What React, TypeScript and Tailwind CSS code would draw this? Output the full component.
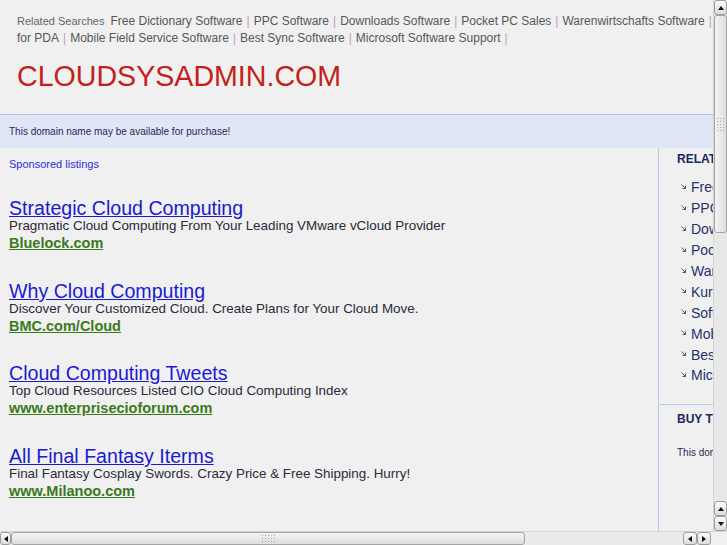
import React from "react";

const topLinks = [
  "Free Dictionary Software",
  "PPC Software",
  "Downloads Software",
  "Pocket PC Sales",
  "Warenwirtschafts Software",
];
const topLinks2 = [
  "Mobile Field Service Software",
  "Best Sync Software",
  "Microsoft Software Support",
];

const ads = [
  {
    title: "Strategic Cloud Computing",
    desc: "Pragmatic Cloud Computing From Your Leading VMware vCloud Provider",
    url: "Bluelock.com",
  },
  {
    title: "Why Cloud Computing",
    desc: "Discover Your Customized Cloud. Create Plans for Your Cloud Move.",
    url: "BMC.com/Cloud",
  },
  {
    title: "Cloud Computing Tweets",
    desc: "Top Cloud Resources Listed CIO Cloud Computing Index",
    url: "www.enterprisecioforum.com",
  },
  {
    title: "All Final Fantasy Iterms",
    desc: "Final Fantasy Cosplay Swords. Crazy Price & Free Shipping. Hurry!",
    url: "www.Milanoo.com",
  },
];

const related = [
  "Free Dictionary Software",
  "PPC Software",
  "Downloads Software",
  "Pocket PC Sales",
  "Warenwirtschafts Software for PDA",
  "Kursverwaltung Software",
  "Software Downloads",
  "Mobile Field Service Software",
  "Best Sync Software",
  "Microsoft Software Support",
];

const Sep = () => <span className="text-[#c79ac0] mx-[4px]">|</span>;

const Tri = ({ dir }: { dir: "up" | "down" | "left" | "right" }) => {
  const pts = {
    up: "0,5 3,1 6,5",
    down: "0,1 3,5 6,1",
    left: "5,0 1,3 5,6",
    right: "1,0 5,3 1,6",
  }[dir];
  return (
    <svg width="6" height="6" viewBox="0 0 6 6">
      <polygon points={pts} fill="#111" />
    </svg>
  );
};

const Btn = ({ dir, className = "" }: { dir: "up" | "down" | "left" | "right"; className?: string }) => (
  <div
    className={
      "flex items-center justify-center border border-[#9d9d9d] rounded-[3px] bg-gradient-to-b from-[#fbfbfb] to-[#dcdcdc] " +
      className
    }
  >
    <Tri dir={dir} />
  </div>
);

const Grip = ({ vertical }: { vertical: boolean }) => (
  <div className={"grid gap-[2px] " + (vertical ? "grid-cols-3" : "grid-cols-5")}>
    {Array.from({ length: 15 }).map((_, i) => (
      <span key={i} className="w-[1px] h-[1px] bg-[#a8a8a8]" />
    ))}
  </div>
);

export default function App() {
  return (
    <div className="w-[727px] h-[545px] flex flex-col bg-[#f0f0f0] font-['Liberation_Sans',Arial,sans-serif] overflow-hidden">
      <div className="flex flex-1 min-h-0">
        <div className="w-[713px] h-[531px] overflow-hidden flex flex-col">
          {/* header */}
          <div className="pt-[13px] pl-[17px] text-[12px] leading-[17px] text-[#575757] whitespace-nowrap">
            <span className="text-[11px] text-[#666] mr-[6px]">Related Searches</span>
            {topLinks.map((l, i) => (
              <React.Fragment key={l}>
                {i > 0 && <Sep />}
                <span>{l}</span>
              </React.Fragment>
            ))}
            <Sep />
            <br />
            <span>for PDA</span>
            {topLinks2.map((l) => (
              <React.Fragment key={l}>
                <Sep />
                <span>{l}</span>
              </React.Fragment>
            ))}
            <Sep />
          </div>
          <div className="mt-[13px] pl-[17px] text-[28.6px] leading-[32px] text-[#c41f1c]">CLOUDSYSADMIN.COM</div>
          <div className="mt-[22px] h-[34px] flex-none border-t border-[#b6c7e6] bg-[#dfe6f5] flex items-center pl-[9px] text-[10px] text-[#1f2a55]">
            This domain name may be available for purchase!
          </div>

          <div className="flex flex-1 min-h-0">
            <div className="w-[658px] flex-none pl-[9px]">
              <div className="pt-[9px] text-[11px] leading-[14px] text-[#2b2bdd]">Sponsored listings</div>
              <div className="flex flex-col gap-[28.7px] mt-[27px]">
                {ads.map((a) => (
                  <div key={a.title} className="flex flex-col">
                    <a className="text-[19.6px] leading-[20px] text-[#1a1ad0] underline self-start">{a.title}</a>
                    <div className="text-[13.4px] leading-[16px] text-[#2a2a3a]">{a.desc}</div>
                    <a className="text-[14.5px] leading-[18px] font-bold text-[#3b7a1c] underline self-start">{a.url}</a>
                  </div>
                ))}
              </div>
            </div>
            <div className="w-[300px] flex-none border-l border-[#b9cbe9] whitespace-nowrap">
              <div className="pl-[18px] pt-[3px] pb-[18px]">
                <div className="text-[12px] leading-[16px] font-bold text-[#1b2761]">RELATED SEARCHES</div>
                <div className="mt-[10.5px] flex flex-col">
                  {related.map((r) => (
                    <div key={r} className="flex items-center h-[20.9px] pl-[4px] gap-[5px]">
                      <svg width="5" height="5" viewBox="0 0 5 5" className="-mt-[3px] flex-none">
                        <path d="M0.5 0.5 L4.5 4.5 M4.5 1.5 L4.5 4.5 L1.5 4.5" stroke="#4b5683" strokeWidth="1" fill="none" />
                      </svg>
                      <span className="text-[14px] text-[#24326b] flex-none">{r}</span>
                    </div>
                  ))}
                </div>
              </div>
              <div className="border-t border-[#b9cbe9] pl-[18px] pt-[6px]">
                <div className="text-[12px] leading-[16px] font-bold text-[#1b2761]">BUY THIS DOMAIN</div>
                <div className="mt-[19px] text-[10px] leading-[14px] text-[#1f2a55]">This domain may be for sale</div>
              </div>
            </div>
          </div>
        </div>

        {/* vertical scrollbar */}
        <div className="w-[14px] flex-none flex flex-col bg-[#e8e8e8] border-l border-[#d4d4d4]">
          <Btn dir="up" className="h-[15px] flex-none" />
          <div className="h-[218px] flex-none border border-[#a4a4a4] rounded-[3px] bg-gradient-to-r from-[#f4f4f4] to-[#dedede] flex items-center justify-center">
            <Grip vertical />
          </div>
          <div className="flex-1" />
          <Btn dir="up" className="h-[15px] flex-none" />
          <Btn dir="down" className="h-[15px] flex-none" />
        </div>
      </div>

      {/* horizontal scrollbar */}
      <div className="h-[14px] flex-none flex bg-[#ebebeb] border-t border-[#d4d4d4]">
        <Btn dir="left" className="w-[11px] flex-none" />
        <div className="w-[514px] flex-none border border-[#a4a4a4] rounded-[3px] bg-gradient-to-b from-[#f4f4f4] to-[#dedede] flex items-center justify-center">
          <Grip vertical={false} />
        </div>
        <div className="w-[158px] flex-none" />
        <Btn dir="left" className="w-[14px] flex-none" />
        <Btn dir="right" className="w-[14px] flex-none" />
        <div className="flex-1 bg-[#f0f0f0]" />
      </div>
    </div>
  );
}
